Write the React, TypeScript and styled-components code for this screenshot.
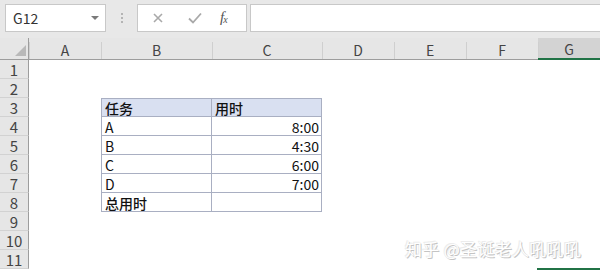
import React from "react";
import styled, { createGlobalStyle } from "styled-components";

const GlobalStyle = createGlobalStyle`
  html, body {
    margin: 0;
    padding: 0;
    overflow: hidden;
    background: #ffffff;
  }
  body {
    font-family: "Noto Sans CJK SC", "Liberation Sans", sans-serif;
  }
`;

const COLS = ["A", "B", "C", "D", "E", "F", "G"];
const WIDTHS = "29px 72px 111px 110px 72px 72px 72px 1fr";

type CellData = { text?: string; kind?: "head" | "body"; align?: "left" | "right"; first?: boolean; top?: boolean };

const table: Record<number, [CellData, CellData]> = {
  3: [{ text: "任务", kind: "head", first: true, top: true }, { text: "用时", kind: "head", top: true }],
  4: [{ text: "A", kind: "body", first: true }, { text: "8:00", kind: "body", align: "right" }],
  5: [{ text: "B", kind: "body", first: true }, { text: "4:30", kind: "body", align: "right" }],
  6: [{ text: "C", kind: "body", first: true }, { text: "6:00", kind: "body", align: "right" }],
  7: [{ text: "D", kind: "body", first: true }, { text: "7:00", kind: "body", align: "right" }],
  8: [{ text: "总用时", kind: "body", first: true }, { kind: "body" }],
};

const Screen = styled.div`
  position: relative;
  width: 600px;
  height: 270px;
  overflow: hidden;
  background: #ffffff;
`;

const Toolbar = styled.div`
  display: flex;
  align-items: center;
  height: 38px;
  padding: 0 0 0 5px;
  background: #e8e8e8;
  box-sizing: border-box;
`;

const NameBox = styled.div`
  display: flex;
  align-items: center;
  justify-content: space-between;
  width: 101px;
  height: 28px;
  margin-top: -3px;
  padding: 0 6px 0 7px;
  box-sizing: border-box;
  background: #fff;
  border: 1px solid #c8c8c8;
  font-size: 14px;
  color: #333;
`;

const Caret = styled.span`
  width: 0;
  height: 0;
  border-left: 4px solid transparent;
  border-right: 4px solid transparent;
  border-top: 4px solid #7a7a7a;
`;

const Dots = styled.div`
  display: flex;
  flex-direction: column;
  gap: 2px;
  margin: -3px 14px 0 15px;
  span {
    width: 2px;
    height: 2px;
    background: #b4b4b4;
  }
`;

const FxBox = styled.div`
  display: flex;
  align-items: center;
  width: 110px;
  height: 28px;
  margin-top: -3px;
  box-sizing: border-box;
  background: #fff;
  border: 1px solid #c8c8c8;
  padding-left: 13px;
`;

const FxIcon = styled.span`
  font-family: "Liberation Serif", serif;
  font-style: italic;
  font-size: 15px;
  color: #555;
  margin-left: 17px;
  letter-spacing: -1px;
  sub {
    font-size: 10px;
    vertical-align: -1px;
  }
`;

const FormulaInput = styled.div`
  flex: 1;
  height: 28px;
  margin: -3px 0 0 3px;
  background: #fff;
  border: 1px solid #c8c8c8;
  border-right: none;
  box-sizing: border-box;
`;

const Sheet = styled.div`
  display: grid;
  grid-template-columns: ${WIDTHS};
  grid-template-rows: 22px;
  grid-auto-rows: 19px;
  font-size: 14px;
`;

const Corner = styled.div`
  position: relative;
  background: #e6e6e6;
  border-right: 1px solid #9d9d9d;
  border-bottom: 1px solid #9d9d9d;
  box-sizing: border-box;
  &::after {
    content: "";
    position: absolute;
    right: 2px;
    bottom: 3px;
    width: 0;
    height: 0;
    border-left: 11px solid transparent;
    border-bottom: 11px solid #b9b9b9;
  }
`;

const ColHead = styled.div<{ $selected?: boolean }>`
  position: relative;
  display: flex;
  align-items: center;
  justify-content: center;
  padding-top: 2px;
  box-sizing: border-box;
  background: ${(p) => (p.$selected ? "#d3d3d3" : "#e6e6e6")};
  border-bottom: ${(p) => (p.$selected ? "2px solid #217346" : "1px solid #9d9d9d")};
  color: #444;
  &::before {
    content: "";
    position: absolute;
    left: 0;
    top: 4px;
    bottom: 0;
    width: 1px;
    background: #cfcfcf;
  }
`;

const RowHead = styled.div`
  display: flex;
  align-items: center;
  justify-content: center;
  background: #e6e6e6;
  border-right: 1px solid #9d9d9d;
  border-bottom: 1px solid #d2d2d2;
  box-sizing: border-box;
  color: #444;
  font-size: 15px;
`;

const Cell = styled.div<{ $kind?: "head" | "body"; $align?: "left" | "right"; $first?: boolean; $top?: boolean; $cjk?: boolean }>`
  display: flex;
  align-items: center;
  justify-content: ${(p) => (p.$align === "right" ? "flex-end" : "flex-start")};
  padding: 1px 2px 0 3px;
  box-sizing: border-box;
  white-space: nowrap;
  color: #111;
  background: ${(p) => (p.$kind === "head" ? "#d9e0f1" : "transparent")};
  font-weight: ${(p) => (p.$cjk ? 500 : 400)};
  ${(p) => (p.$kind ? "border-right: 1px solid #a9afc2; border-bottom: 1px solid #a9afc2;" : "")}
  ${(p) => (p.$first ? "border-left: 1px solid #a9afc2;" : "")}
  ${(p) => (p.$top ? "border-top: 1px solid #a9afc2;" : "")}
`;

/* top edge of the selected cell G12, just under the last visible row */
const Selection = styled.div`
  position: absolute;
  left: 537px;
  top: 268px;
  width: 63px;
  height: 2px;
  background: #217346;
`;

const Watermark = styled.div`
  position: absolute;
  left: 405px;
  top: 236px;
  font-size: 17px;
  letter-spacing: 0.3px;
  color: #ffffff;
  text-shadow: 1px 1px 0 #c4c4c4, -1px -1px 0 #ececec, 0 0 1px #d0d0d0;
`;

const isCjk = (s?: string) => !!s && /[\u4e00-\u9fff]/.test(s);

const App = () => {
  const rows = Array.from({ length: 11 }, (_, i) => i + 1);
  return (
    <Screen>
      <GlobalStyle />
      <Toolbar>
        <NameBox>
          G12
          <Caret />
        </NameBox>
        <Dots>
          <span />
          <span />
          <span />
        </Dots>
        <FxBox>
          <svg width="14" height="14" viewBox="0 0 14 14">
            <path d="M3 3 L11 11 M11 3 L3 11" stroke="#a9a9a9" strokeWidth="1.6" fill="none" />
          </svg>
          <svg width="16" height="14" viewBox="0 0 16 14" style={{ marginLeft: 22 }}>
            <path d="M2 7.5 L6 11.5 L14 2.5" stroke="#a9a9a9" strokeWidth="1.8" fill="none" />
          </svg>
          <FxIcon>
            f<sub>x</sub>
          </FxIcon>
        </FxBox>
        <FormulaInput />
      </Toolbar>
      <Sheet>
        <Corner />
        {COLS.map((c) => (
          <ColHead key={c} $selected={c === "G"}>
            {c}
          </ColHead>
        ))}
        {rows.map((r) => {
          const t = table[r];
          return (
            <React.Fragment key={r}>
              <RowHead>{r}</RowHead>
              {COLS.map((c, ci) => {
                const d = t && (ci === 1 || ci === 2) ? t[ci - 1] : undefined;
                if (d) {
                  return (
                    <Cell key={c} $kind={d.kind} $first={d.first} $top={d.top} $align={d.align} $cjk={isCjk(d.text)}>
                      {d.text}
                    </Cell>
                  );
                }
                return <Cell key={c} />;
              })}
            </React.Fragment>
          );
        })}
      </Sheet>
      <Selection />
      <Watermark>知乎 @圣诞老人吼吼吼</Watermark>
    </Screen>
  );
};

export default App;
